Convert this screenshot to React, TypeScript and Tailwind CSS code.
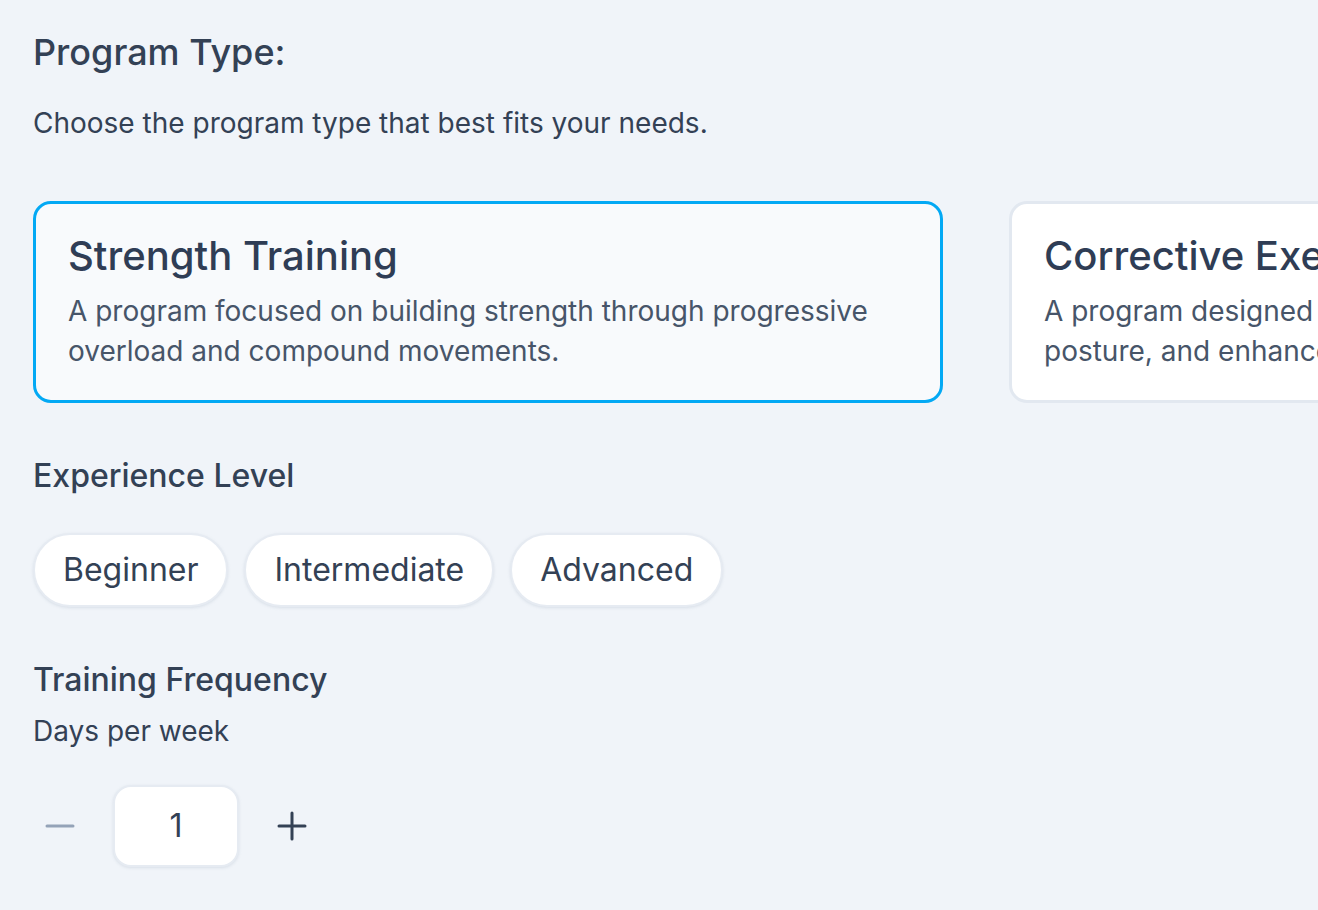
import { useState } from 'react';

const PROGRAMS = [
  {
    id: 'strength',
    title: 'Strength Training',
    description:
      'A program focused on building strength through progressive overload and compound movements.',
  },
  {
    id: 'corrective',
    title: 'Corrective Exercise',
    description:
      'A program designed to correct muscle imbalances, improve posture, and enhance movement quality.',
  },
];

const LEVELS = ['Beginner', 'Intermediate', 'Advanced'];

export default function App() {
  const [program, setProgram] = useState('strength');
  const [level, setLevel] = useState<string | null>(null);
  const [days, setDays] = useState(1);

  return (
    <div
      className="min-h-screen w-full overflow-hidden bg-[#f0f4f9] text-[#334155] px-[33px] pt-[28px] pb-10"
      style={{ fontFamily: 'Inter, "Noto Sans", sans-serif' }}
    >
      <h2 className="text-[36px] leading-[48px] font-medium">Program Type:</h2>
      <p className="mt-[27px] text-[28px] leading-[40px]">
        Choose the program type that best fits your needs.
      </p>

      <div className="mt-[58px] flex gap-[66px]">
        {PROGRAMS.map(p => {
          const active = p.id === program;
          return (
            <button
              key={p.id}
              onClick={() => setProgram(p.id)}
              className={
                'w-[910px] h-[202px] shrink-0 flex flex-col items-start justify-start text-left rounded-[18px] border-[3px] px-[32px] pt-[24px] ' +
                (active ? 'border-[#03a9f4] bg-[#f8fafc]' : 'border-[#e2e8f0] bg-white')
              }
            >
              <div className="text-[40px] leading-[56px] font-medium text-[#2f3d55]">{p.title}</div>
              <div className="mt-[7px] text-[28px] leading-[40px] text-[#475569]">{p.description}</div>
            </button>
          );
        })}
      </div>

      <h3 className="mt-[51px] text-[32px] leading-[44px] font-medium">Experience Level</h3>
      <div className="mt-[35px] flex gap-[16px]">
        {LEVELS.map(l => (
          <button
            key={l}
            onClick={() => setLevel(l)}
            className={
              'h-[74px] px-[28px] rounded-full border-2 text-[32px] leading-[44px] shadow-[0_1px_3px_rgba(148,163,184,0.25)] ' +
              (level === l ? 'border-[#03a9f4] bg-[#f8fafc]' : 'border-[#e6ebf2] bg-white')
            }
          >
            {l}
          </button>
        ))}
      </div>

      <h3 className="mt-[51px] text-[32px] leading-[44px] font-medium">Training Frequency</h3>
      <p className="mt-[9px] text-[28px] leading-[40px]">Days per week</p>

      <div className="mt-[34px] flex items-center gap-[26px]">
        <button
          onClick={() => setDays(d => Math.max(1, d - 1))}
          className="w-[54px] h-[54px] flex items-center justify-center"
        >
          <svg width="30" height="30" viewBox="0 0 30 30" fill="none">
            <path d="M2 15h26" stroke="#94a3b8" strokeWidth="3" strokeLinecap="round" />
          </svg>
        </button>
        <div className="w-[126px] h-[82px] rounded-[18px] bg-white border-2 border-[#e6ebf2] shadow-[0_1px_3px_rgba(148,163,184,0.25)] flex items-center justify-center text-[32px]">
          {days}
        </div>
        <button
          onClick={() => setDays(d => Math.min(7, d + 1))}
          className="w-[54px] h-[54px] flex items-center justify-center"
        >
          <svg width="30" height="30" viewBox="0 0 30 30" fill="none">
            <path d="M2 15h26M15 2v26" stroke="#334155" strokeWidth="3" strokeLinecap="round" />
          </svg>
        </button>
      </div>
    </div>
  );
}
